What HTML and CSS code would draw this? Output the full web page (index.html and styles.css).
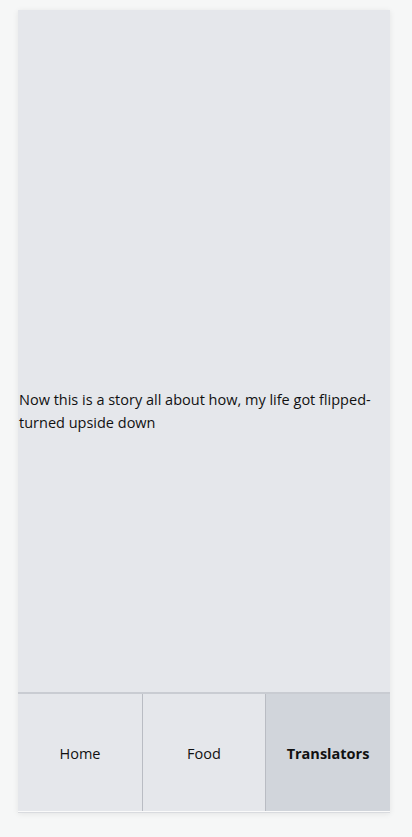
FILE: index.html
```html
<!DOCTYPE html>
<html lang="en">
<head>
<meta charset="utf-8">
<link rel="stylesheet" href="styles.css">
</head>
<body>
<div class="card">
  <main class="content">
    <p class="story">Now this is a story all about how, my life got flipped-turned upside down</p>
  </main>
  <nav class="tabs">
    <div class="tab">Home</div>
    <div class="tab">Food</div>
    <div class="tab active">Translators</div>
  </nav>
</div>
</body>
</html>
```

FILE: styles.css
```css
* { box-sizing: border-box; }
html, body { margin: 0; padding: 0; }
body {
  background: #f6f7f7;
  font-family: "Open Sans", "Noto Sans", sans-serif;
  color: #111;
  padding: 10px 22px 24px 18px;
  height: 837px;
}
.card {
  width: 372px;
  height: 803px;
  background: #e5e7eb;
  display: flex;
  flex-direction: column;
  box-shadow: 0 1px 6px rgba(0,0,0,0.08);
  border-bottom: 1px solid #d9dbdf;
}
.content {
  flex: 1;
  display: flex;
  align-items: center;
  padding-top: 120px;
}
.story {
  margin: 0;
  padding-left: 1px;
  font-size: 14.5px;
  line-height: 23px;
}
.tabs {
  height: 120px;
  display: grid;
  grid-template-columns: 125px 123px 1fr;
  border-top: 2px solid #c9ccd2;
  border-bottom: 1px solid #fafafa;
}
.tab {
  display: flex;
  align-items: center;
  justify-content: center;
  font-size: 14.5px;
  border-right: 1px solid #b9bcc3;
  padding-top: 2px;
}
.tab:last-child { border-right: none; }
.tab.active {
  background: #d1d5db;
  font-weight: 700;
}
```
